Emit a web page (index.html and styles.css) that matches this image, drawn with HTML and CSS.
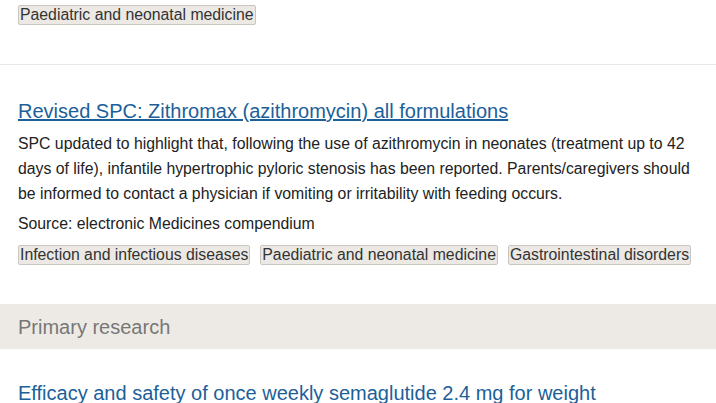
FILE: index.html
```html
<!DOCTYPE html>
<html lang="en">
<head>
  <meta charset="UTF-8" />
  <meta name="viewport" content="width=device-width, initial-scale=1" />
  <title>Latest updates</title>
  <link rel="stylesheet" href="styles.css">
</head>
<body>
  <div class="feed">
    <div class="item item-first">
      <div class="tags">
        <span class="tag">Paediatric and neonatal medicine</span>
      </div>
    </div>

    <div class="item">
      <h3 class="item-title"><a href="#">Revised SPC: Zithromax (azithromycin) all formulations</a></h3>
      <p class="item-text">SPC updated to highlight that, following the use of azithromycin in neonates (treatment up to 42 days of life), infantile hypertrophic pyloric stenosis has been reported. Parents/caregivers should be informed to contact a physician if vomiting or irritability with feeding occurs.</p>
      <p class="item-source">Source: electronic Medicines compendium</p>
      <div class="tags">
        <span class="tag">Infection and infectious diseases</span>
        <span class="tag">Paediatric and neonatal medicine</span>
        <span class="tag">Gastrointestinal disorders</span>
      </div>
    </div>

    <div class="section-head">Primary research</div>

    <div class="item item-next">
      <h3 class="item-title plain"><a href="#">Efficacy and safety of once weekly semaglutide 2.4 mg for weight management</a></h3>
    </div>
  </div>
</body>
</html>
```

FILE: styles.css
```css
* {
  margin: 0;
  padding: 0;
  box-sizing: border-box;
}

body {
  font-family: "Liberation Sans", Arial, sans-serif;
  background-color: #fff;
  color: #222;
  font-size: 15.8px;
}

.item {
  padding: 32px 18px 39px;
  border-bottom: 1px solid #e8e8e8;
}

.item-first {
  padding-top: 5px;
}

.item-next {
  padding-top: 30px;
  border-bottom: none;
}

.item-title {
  font-size: 20px;
  font-weight: normal;
  line-height: 28px;
  margin-bottom: 6px;
}

.item-title a {
  color: #1d5f99;
}

.item-title.plain a {
  text-decoration: none;
}

.item-text {
  line-height: 25px;
  margin-bottom: 6px;
}

.item-source {
  line-height: 24px;
  margin-bottom: 9px;
}

.tags {
  display: flex;
  flex-wrap: wrap;
  gap: 10px;
}

.tag {
  background-color: #ece9e4;
  border: 1px solid #c9c6c0;
  border-radius: 2px;
  padding: 0 1px;
  line-height: 18px;
  color: #333;
}

.section-head {
  background-color: #edeae5;
  color: #777;
  font-size: 20px;
  padding: 0 18px;
  line-height: 44px;
}
```
